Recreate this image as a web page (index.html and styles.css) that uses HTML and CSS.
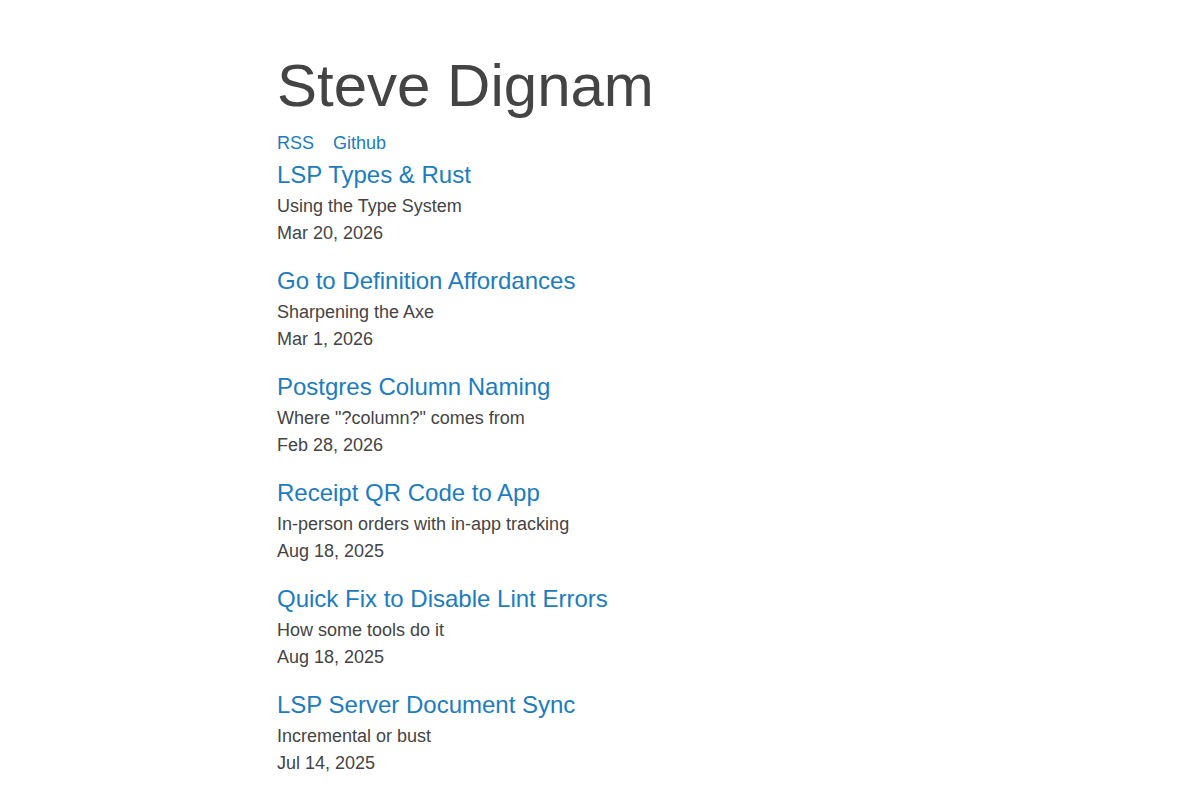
FILE: index.html
```html
<!DOCTYPE html>
<html lang="en">
<head>
  <meta charset="UTF-8">
  <title>Steve Dignam</title>
  <link rel="stylesheet" href="styles.css">
</head>
<body>
  <div class="page">
    <h1 class="site-title">Steve Dignam</h1>
    <nav class="links">
      <a href="#">RSS</a>
      <a href="#">Github</a>
    </nav>
    <ul class="posts">
      <li class="post">
        <a class="post-title" href="#">LSP Types &amp; Rust</a>
        <div class="post-sub">Using the Type System</div>
        <div class="post-date">Mar 20, 2026</div>
      </li>
      <li class="post">
        <a class="post-title" href="#">Go to Definition Affordances</a>
        <div class="post-sub">Sharpening the Axe</div>
        <div class="post-date">Mar 1, 2026</div>
      </li>
      <li class="post">
        <a class="post-title" href="#">Postgres Column Naming</a>
        <div class="post-sub">Where "?column?" comes from</div>
        <div class="post-date">Feb 28, 2026</div>
      </li>
      <li class="post">
        <a class="post-title" href="#">Receipt QR Code to App</a>
        <div class="post-sub">In-person orders with in-app tracking</div>
        <div class="post-date">Aug 18, 2025</div>
      </li>
      <li class="post">
        <a class="post-title" href="#">Quick Fix to Disable Lint Errors</a>
        <div class="post-sub">How some tools do it</div>
        <div class="post-date">Aug 18, 2025</div>
      </li>
      <li class="post">
        <a class="post-title" href="#">LSP Server Document Sync</a>
        <div class="post-sub">Incremental or bust</div>
        <div class="post-date">Jul 14, 2025</div>
      </li>
    </ul>
  </div>
</body>
</html>
```

FILE: styles.css
```css
body{
  margin:0;
  background:#fff;
  color:#444;
  font-family:"Liberation Sans", Arial, sans-serif;
  font-size:18px;
  line-height:1.5;
}
a{
  color:#1c7cc0;
  text-decoration:none;
}
.page{
  width:646px;
  margin:0 auto;
  padding:42px 0 0 0;
}
.site-title{
  margin:0;
  font-size:60px;
  font-weight:normal;
  line-height:88px;
  color:#444;
}
.links a{
  margin-right:14px;
}
.posts{
  list-style:none;
  margin:0;
  padding:0;
}
.post{
  margin-bottom:16px;
}
.post-title{
  display:block;
  font-size:24px;
  line-height:36px;
}
```
